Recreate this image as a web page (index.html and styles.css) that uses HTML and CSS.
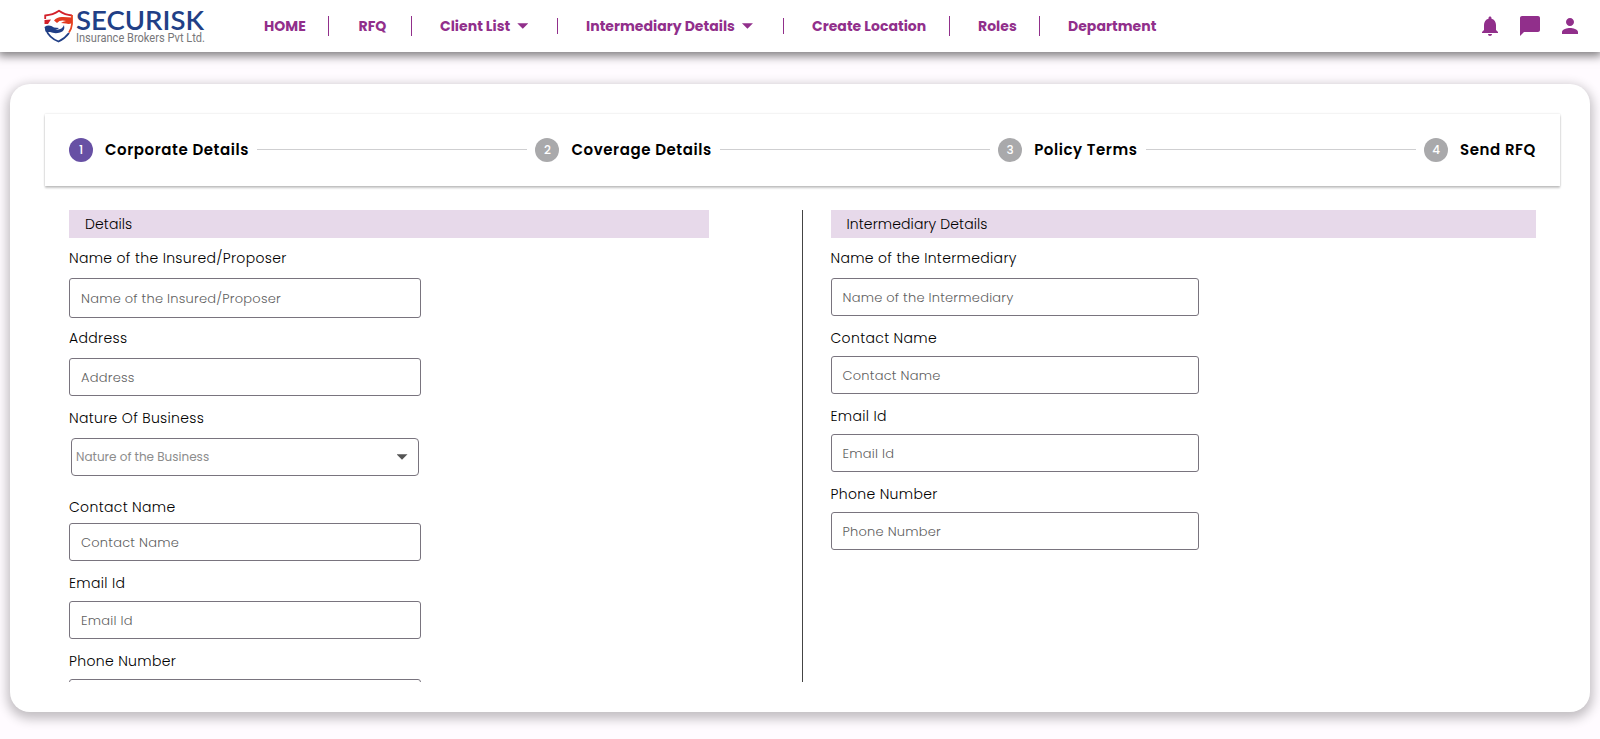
FILE: index.html
```html
<!DOCTYPE html>
<html lang="en">
<head>
<meta charset="utf-8">
<title>Securisk - RFQ</title>
<link rel="stylesheet" href="styles.css">
</head>
<body>
<header class="topbar">
  <svg class="logo" viewBox="0 0 166 42" width="166" height="42">
    <g transform="translate(0 1)">
      <g fill="none" stroke-width="1.800">
        <path stroke="#d3202a" d="M1.200 13V9.500Q9 9 15 4.800Q21 9 28 9.500"/>
        <path stroke="#e8431f" d="M28 9V18Q27.500 23 25 26.500"/>
        <path stroke="#213f86" d="M1.800 23Q5 32 14.500 35.500Q21 32.500 25 27"/>
      </g>
      <path fill="#e23a20" d="M10 14.500Q13 10.500 19 11L28 11.500V17Q25 18.500 22 17.500L17 17Q19 15.500 22 15Q16 13.500 13 17Z"/>
      <path fill="#d3202a" d="M.5 14L7 13.500L4 18H.5Z"/>
      <path fill="#213f86" d="M.5 21Q5 18 10 21.500L15 22Q13 23.800 11 23.500Q18 24.500 20 19Q21.500 25 16 26.500Q11 28 6 26H1.800Z"/>
    </g>
    <text class="logo-name" x="32" y="25.200" textLength="128" lengthAdjust="spacingAndGlyphs">SECURISK</text>
    <text class="logo-sub" x="32" y="37" textLength="129" lengthAdjust="spacingAndGlyphs">Insurance Brokers Pvt Ltd.</text>
  </svg>
  <nav class="nav">
    <a class="nav-item">HOME</a>
    <a class="nav-item">RFQ</a>
    <a class="nav-item short">Client List<i class="caret"></i></a>
    <a class="nav-item short">Intermediary Details<i class="caret"></i></a>
    <a class="nav-item">Create Location</a>
    <a class="nav-item">Roles</a>
    <a class="nav-item last">Department</a>
  </nav>
  <div class="actions">
    <svg width="24" height="24" viewBox="0 0 24 24"><path d="M12 22c1.100 0 2-.9 2-2h-4c0 1.100.9 2 2 2zm6-6v-5c0-3.070-1.630-5.640-4.500-6.320V4c0-.83-.67-1.500-1.500-1.500s-1.500.67-1.500 1.500v.68C7.640 5.360 6 7.920 6 11v5l-2 2v1h16v-1l-2-2z"/></svg>
    <svg width="24" height="24" viewBox="0 0 24 24"><path d="M20 2H4c-1.100 0-2 .9-2 2v18l4-4h14c1.100 0 2-.9 2-2V4c0-1.100-.9-2-2-2z"/></svg>
    <svg width="24" height="24" viewBox="0 0 24 24"><path d="M12 12c2.210 0 4-1.790 4-4s-1.790-4-4-4-4 1.790-4 4 1.790 4 4 4zm0 2c-2.670 0-8 1.340-8 4v2h16v-2c0-2.660-5.330-4-8-4z"/></svg>
  </div>
</header>
<main class="card">
  <div class="stepper">
    <span class="dot active">1</span><span class="step-label">Corporate Details</span><span class="line"></span>
    <span class="dot">2</span><span class="step-label">Coverage Details</span><span class="line"></span>
    <span class="dot">3</span><span class="step-label">Policy Terms</span><span class="line"></span>
    <span class="dot">4</span><span class="step-label">Send RFQ</span>
  </div>
  <div class="columns">
    <section class="col left">
      <h2 class="band">Details</h2>
      <label class="label">Name of the Insured/Proposer</label>
      <div class="field tall">Name of the Insured/Proposer</div>
      <label class="label">Address</label>
      <div class="field">Address</div>
      <label class="label nature">Nature Of Business</label>
      <div class="select">Nature of the Business<i class="caret"></i></div>
      <label class="label low">Contact Name</label>
      <div class="field">Contact Name</div>
      <label class="label next">Email Id</label>
      <div class="field">Email Id</div>
      <label class="label next">Phone Number</label>
      <div class="field">Phone Number</div>
    </section>
    <section class="col right">
      <h2 class="band">Intermediary Details</h2>
      <label class="label">Name of the Intermediary</label>
      <div class="field">Name of the Intermediary</div>
      <label class="label next">Contact Name</label>
      <div class="field">Contact Name</div>
      <label class="label next">Email Id</label>
      <div class="field">Email Id</div>
      <label class="label next">Phone Number</label>
      <div class="field">Phone Number</div>
    </section>
  </div>
</main>
</body>
</html>
```
FILE: styles.css
```css
* { box-sizing: border-box; }
body {
  margin: 0;
  height: 739px;
  overflow: hidden;
  background: #fffbff;
  font-family: Poppins, Inter, "Open Sans", sans-serif;
}
.topbar {
  display: flex;
  align-items: center;
  height: 52px;
  padding: 0 18px 0 44px;
  background: #fff;
  box-shadow: 0 2px 9px 2px rgba(0, 0, 0, .5);
}
.logo { flex: none; overflow: visible; }
.logo-name { font: 600 27px Lato, sans-serif; fill: #213f86; }
.logo-sub { font: 400 13px Roboto, sans-serif; fill: #77777a; }
.nav {
  display: grid;
  grid-template-columns: 65px 83px 146px 226px 166px 90px 120px;
  margin-left: 54px;
  color: #912f8b;
  font-size: 14px;
  font-weight: 700;
  letter-spacing: .03px;
}
.nav-item {
  display: flex;
  align-items: center;
  height: 20px;
  padding-left: 28px;
  border-right: 1px solid #912f8b;
  white-space: nowrap;
}
.nav-item:first-child { padding-left: 0; }
.nav-item:nth-child(2) { padding-left: 29.500px; }
.nav-item.short { height: 16px; align-self: center; }
.nav-item.last { border: 0; }
.caret {
  flex: none;
  width: 11px;
  height: 5.500px;
  margin-left: 7px;
  background: currentColor;
  clip-path: polygon(0 0, 100% 0, 50% 100%);
}
.actions { display: flex; gap: 16px; margin-left: auto; fill: #912f8b; }
.actions svg { display: block; }
.card {
  height: 628px;
  margin: 32px 10px 0;
  padding: 30px 30px 0 35px;
  background: #fff;
  border-radius: 20px;
  box-shadow: 0 4px 11px 3px rgba(0, 0, 0, .24);
}
.stepper {
  display: flex;
  align-items: center;
  height: 72px;
  padding: 0 24px;
  box-shadow: 0 2px 2px rgba(0, 0, 0, .22), 0 0 2px rgba(0, 0, 0, .14);
}
.dot {
  flex: none;
  width: 24px;
  height: 24px;
  border-radius: 50%;
  background: #a9a9ab;
  color: #fff;
  font-size: 12px;
  font-weight: 500;
  line-height: 24px;
  text-align: center;
}
.dot.active { background: #6750a4; }
.step-label {
  flex: none;
  margin-left: 12px;
  padding-bottom: 2px;
  color: #000;
  font-size: 15px;
  font-weight: 600;
  letter-spacing: .57px;
}
.line { flex: 1; height: 1px; margin: 0 8px 1px; background: #cfcfd1; }
.columns {
  display: flex;
  height: 472px;
  margin: 24px 24px 0;
  overflow: hidden;
}
.col { display: flex; flex-direction: column; }
.left { width: 734px; padding-right: 93px; border-right: 1px solid #444; }
.right { flex: 1; padding-left: 27.500px; }
.band {
  flex: none;
  height: 28px;
  margin: 0;
  padding-left: 16px;
  background: #e7d9ea;
  color: #000;
  font-size: 14px;
  font-weight: 300;
  line-height: 28px;
  letter-spacing: .1px;
}
.label {
  flex: none;
  height: 40px;
  color: #000;
  font-size: 14px;
  font-weight: 300;
  line-height: 40px;
  letter-spacing: .33px;
}
.field {
  flex: none;
  width: 352px;
  height: 38px;
  padding-left: 11px;
  border: 1px solid #79747e;
  border-radius: 3px;
  color: #5f5f5f;
  font-size: 13px;
  font-weight: 300;
  letter-spacing: .23px;
  line-height: 37px;
}
.tall { height: 40px; line-height: 39px; }
.select {
  display: flex;
  flex: none;
  align-items: center;
  justify-content: space-between;
  width: 348px;
  height: 38px;
  margin-left: 2px;
  padding: 0 10.500px 0 4px;
  border: 1px solid #79747e;
  border-radius: 4px;
  color: #8c8c8c;
  font-size: 12px;
}
.select .caret { color: #555; }
.nature { height: 42px; line-height: 44px; }
.low { height: 47px; padding-top: 11px; }
.next { line-height: 44px; }
.right .field { width: 368px; }
```
